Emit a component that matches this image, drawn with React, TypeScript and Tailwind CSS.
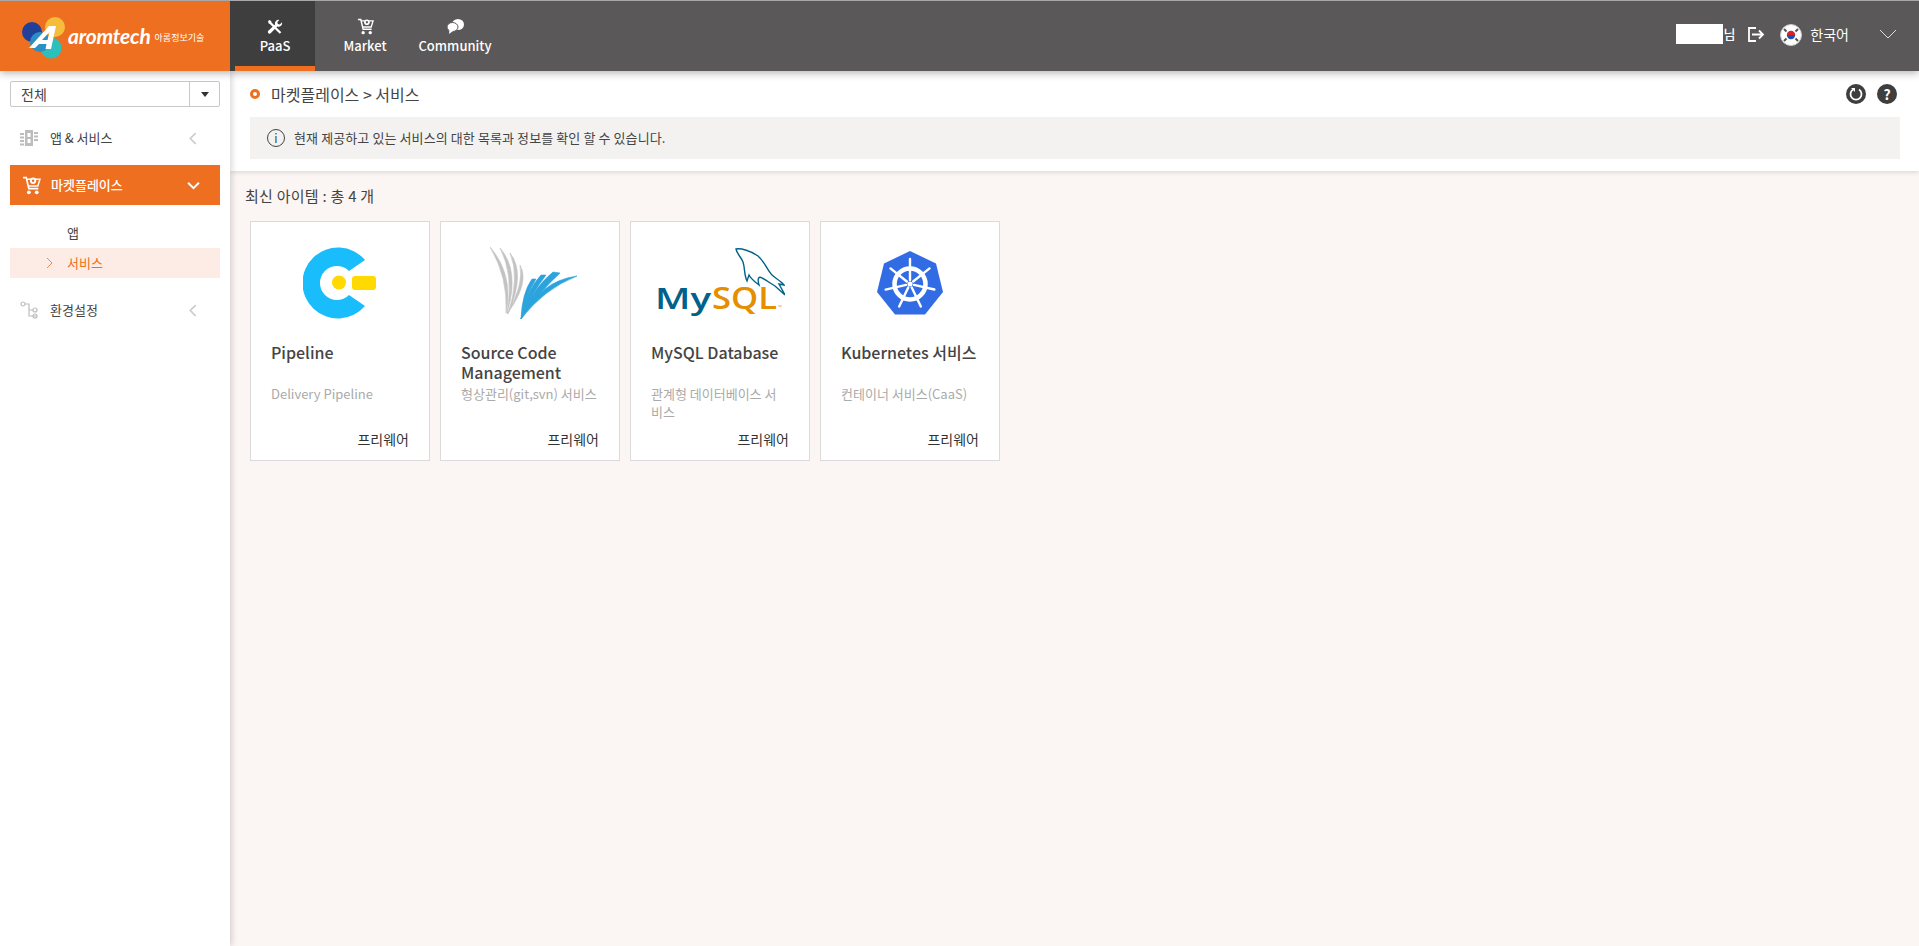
const FONT = "font-['Noto_Sans_CJK_KR','Noto_Sans',sans-serif]";

const CARDS = [
  { title: 'Pipeline', desc: 'Delivery Pipeline', logo: 'pipeline' },
  { title: 'Source Code Management', desc: '형상관리(git,svn) 서비스', logo: 'scm' },
  { title: 'MySQL Database', desc: '관계형 데이터베이스 서비스', logo: 'mysql' },
  { title: 'Kubernetes 서비스', desc: '컨테이너 서비스(CaaS)', logo: 'k8s' },
];

function BrandMark() {
  return (
    <svg width="44" height="42" viewBox="0 0 44 42" className="mt-[4px] shrink-0">
      <circle cx="10" cy="15" r="10" fill="#21409a" />
      <circle cx="33" cy="10" r="10" fill="#f6bd3b" />
      <circle cx="29" cy="31" r="10.500" fill="#2cc0bd" />
      <circle cx="18" cy="25" r="10" fill="#2a8fc4" />
      <path d="M7 31 L27 9 L34 9 L29 32 L23.500 32 L24.500 27 L17 27 L13 31 Z M20 23 L25.500 23 L27.500 15 Z" fill="#fff" fillRule="evenodd" />
    </svg>
  );
}

function PaasIcon() {
  return (
    <svg width="16" height="16" viewBox="0 0 16 16" fill="#fff">
      <path d="M1 2.200 2.200 1l2 1 .3 1.400 9.800 9.800-1.600 1.600-9.800-9.800L1.700 4.600z" />
      <path d="M15 3.200a3.600 3.600 0 0 1-4.700 4.400L3.900 14a1.700 1.700 0 0 1-2.600-2.300l6.700-6.200A3.600 3.600 0 0 1 12.400 1l-2 2 .4 2 2 .4z" />
    </svg>
  );
}

function CartIcon({ size = 16, hole = '#ee6f20' }: { size?: number; hole?: string }) {
  return (
    <svg width={size} height={size} viewBox="0 0 18 18" fill="none" stroke="#fff">
      <path d="M1 1.500h3l2.500 10.500h9" strokeWidth="1.600" />
      <path d="M4.500 3H17l-2 6.500H6" strokeWidth="1.400" />
      <circle cx="10.500" cy="4.500" r="3" fill="#fff" stroke="none" />
      <circle cx="10.500" cy="4.500" r="1.200" fill={hole} stroke="none" />
      <circle cx="6.500" cy="15.500" r="1.800" fill="#fff" stroke="none" />
      <circle cx="14" cy="15.500" r="1.800" fill="#fff" stroke="none" />
    </svg>
  );
}

function ChatIcon() {
  return (
    <svg width="17" height="15" viewBox="0 0 17 15" fill="#fff">
      <ellipse cx="11" cy="5.500" rx="6" ry="5.500" />
      <ellipse cx="5.500" cy="8" rx="5.500" ry="4.500" stroke="#5a5858" strokeWidth="1" />
      <path d="M2.500 10.500 2 15l4-3z" />
    </svg>
  );
}

function Chevron({ dir, color = '#cccccc', size = 12, width = 1.5 }: { dir: 'left' | 'right' | 'down'; color?: string; size?: number; width?: number }) {
  const d = dir === 'left' ? 'M8 1 3 6l5 5' : dir === 'right' ? 'M4 1l5 5-5 5' : 'M1 3.500 6 8.500l5-5';
  return (
    <svg width={size} height={size} viewBox="0 0 12 12" fill="none" stroke={color} strokeWidth={width}>
      <path d={d} />
    </svg>
  );
}

function FlagIcon() {
  return (
    <svg width="22" height="22" viewBox="0 0 22 22">
      <circle cx="11" cy="11" r="10.500" fill="#fff" stroke="#c9c9c9" />
      <path d="M4 5 6.500 7.500M18 5 15.500 7.500M4 17 6.500 14.500M18 17 15.500 14.500" stroke="#555" strokeWidth="2" />
      <path d="M6.800 11a4.200 4.200 0 0 1 8.400 0z" fill="#d8232a" />
      <path d="M6.800 11a4.200 4.200 0 0 0 8.400 0z" fill="#1f4fb0" />
    </svg>
  );
}

function PipelineLogo() {
  return (
    <svg width="74" height="72" viewBox="0 0 74 72">
      <path d="M62 13A35.500 35.500 0 1 0 62 59L46 48a17 17 0 1 1 0-24z" fill="#19bdfb" />
      <circle cx="36" cy="35.500" r="7" fill="#ffd900" />
      <rect x="49" y="29" width="24" height="14" rx="3" fill="#ffd900" />
    </svg>
  );
}

function ScmLogo() {
  const gray = [
    'M0 0Q24 28 16 66Q18 30 0 0Z',
    'M10 1Q30 24 17 66Q24 28 10 1Z',
    'M20 6Q36 26 18 67Q30 30 20 6Z',
    'M30 18Q40 36 17 67Q34 38 30 18Z',
  ];
  const blue = [
    'M42 32Q32 46 31 72Q36 48 46 32Z',
    'M51 28Q36 44 31 72Q42 46 56 28Z',
    'M63 25Q42 42 31 72Q48 46 70 26Z',
    'M87 29Q50 34 31 72Q54 42 87 29Z',
  ];
  return (
    <svg width="87" height="73" viewBox="0 0 87 73" className="ml-[7px] mt-px">
      {gray.map((d, i) => <path key={i} d={d} fill="#c2c2c2" stroke="#c2c2c2" strokeWidth="0.600" />)}
      {blue.map((d, i) => <path key={i} d={d} fill="#2ba3dc" stroke="#2ba3dc" strokeWidth="0.600" />)}
    </svg>
  );
}

function MysqlLogo() {
  return (
    <svg width="130" height="70" viewBox="0 0 130 70">
      <path d="M81 1C86 0 96 3 103 8C110 14 112 22 117 27C120 30 126 33 129 37L124 36L130 47L120 38C115 35 111 32 107 30C104 28 102 30 104 37C99 33 96 31 94 27L92 33C89 27 90 20 88 14C86 9 82 6 81 1Z" fill="none" stroke="#00618a" strokeWidth="1.400" />
      <text x="0" y="61" fill="#00618a" fontFamily="'Open Sans',sans-serif" fontWeight="600" fontSize="29" textLength="56" lengthAdjust="spacingAndGlyphs">My</text>
      <text x="57" y="61" fill="#e48e00" fontFamily="'Open Sans',sans-serif" fontWeight="600" fontSize="31" textLength="65" lengthAdjust="spacingAndGlyphs">SQL</text>
      <text x="123" y="61" fill="#e48e00" fontFamily="'Open Sans',sans-serif" fontSize="5">™</text>
    </svg>
  );
}

function K8sLogo() {
  const spokes = [0, 51.4, 102.8, 154.3, 205.7, 257.1, 308.6];
  return (
    <svg width="66" height="64" viewBox="0 0 66 64">
      <path d="M33 0 59 12.500 66 41 48 63.500H18L0 41 7 12.500z" fill="#326ce5" />
      <g fill="none" stroke="#fff" transform="translate(33 33)">
        <circle r="15.500" strokeWidth="4.500" />
        {spokes.map((a) => (
          <g key={a} transform={`rotate(${a})`}>
            <path d="M0-4V-25" strokeWidth="2.400" strokeLinecap="round" />
          </g>
        ))}
        <circle r="2.500" fill="#fff" stroke="none" />
      </g>
    </svg>
  );
}

function CardLogo({ name }: { name: string }) {
  if (name === 'pipeline') return <PipelineLogo />;
  if (name === 'scm') return <ScmLogo />;
  if (name === 'mysql') return <MysqlLogo />;
  return <K8sLogo />;
}

function ServiceCard({ title, desc, logo }: { title: string; desc: string; logo: string }) {
  return (
    <div className="flex h-[240px] w-[180px] flex-col border border-[#dcdada] bg-white px-5 pb-[12px]">
      <div className="mt-[23px] flex h-[75px] items-center justify-center">
        <CardLogo name={logo} />
      </div>
      <div className="mt-[22px] h-[40px] text-[16px] leading-[20px] font-medium text-[#444]">{title}</div>
      <div className="mt-[3px] h-[36px] pr-[2px] text-[13px] leading-[18px] break-all text-[#aaa]">{desc}</div>
      <div className="mt-auto text-right text-[14px] leading-[18px] text-[#333]">프리웨어</div>
    </div>
  );
}

function Sidebar() {
  return (
    <aside className="relative z-10 w-[230px] shrink-0 bg-white px-[10px] pt-[10px] shadow-[2px_0_6px_rgba(0,0,0,0.15)]">
      <div className="flex h-[26px] items-center rounded-[2px] border border-[#c8c8c8] text-[14px] text-[#444]">
        <span className="flex-1 pl-[10px]">전체</span>
        <span className="flex h-full w-[30px] items-center justify-center border-l border-[#c8c8c8]">
          <span className="h-0 w-0 border-x-[4px] border-t-[5px] border-x-transparent border-t-[#333]" />
        </span>
      </div>
      <div className="mt-[11px] flex h-[40px] items-center pl-[10px] pr-[20px] text-[13px] text-[#444]">
        <svg width="18" height="16" viewBox="0 0 18 16" fill="#bdbdbd" className="mr-[12px]">
          <path d="M0 3h4v2H0zM0 6.500h4v2H0zM0 10h4v2H0zM0 13.500h4v2H0zM14 2h4v2h-4zM14 5.500h4v2h-4zM14 9h4v2h-4zM5 0h8v16H5zM7.500 3v4h3V3zM7.500 9v4h3V9z" fillRule="evenodd" />
        </svg>
        <span className="flex-1">앱 &amp; 서비스</span>
        <Chevron dir="left" size={13} />
      </div>
      <div className="mt-[7px] flex h-[40px] items-center bg-[#ee6f20] pl-[12px] pr-[20px] text-[13px] font-medium text-white">
        <span className="mr-[10px] flex"><CartIcon size={19} /></span>
        <span className="flex-1">마켓플레이스</span>
        <Chevron dir="down" color="#fff" size={13} width={1.800} />
      </div>
      <div className="mt-[13px] flex h-[29px] items-center pl-[57px] text-[13px] text-[#444]">앱</div>
      <div className="mt-px flex h-[30px] items-center bg-[#fdece5] pl-[33px] text-[13px] text-[#ee6f20]">
        <span className="mr-[12px] flex"><Chevron dir="right" color="#ee8a55" size={12} width={1} /></span>
        서비스
      </div>
      <div className="mt-[12px] flex h-[40px] items-center pl-[10px] pr-[20px] text-[13px] text-[#444]">
        <svg width="18" height="18" viewBox="0 0 18 18" fill="none" stroke="#bdbdbd" strokeWidth="1.200" className="mr-[12px]">
          <circle cx="3" cy="3" r="2" />
          <circle cx="15" cy="9" r="2" />
          <circle cx="15" cy="15" r="2" />
          <path d="M5 3h4v12h8M9 9h4" />
        </svg>
        <span className="flex-1">환경설정</span>
        <Chevron dir="left" size={13} />
      </div>
    </aside>
  );
}

export default function App() {
  return (
    <div className={`flex h-screen w-full flex-col overflow-hidden bg-white ${FONT}`}>
      <header className="relative z-20 flex h-[71px] shrink-0 border-t border-[#a8a8a8] bg-[#5a5858] shadow-[0_2px_8px_rgba(0,0,0,0.3)]">
        <div className="flex w-[230px] items-center bg-[#ee6f20] pl-[22px]">
          <BrandMark />
          <span className="ml-[2px] font-['Lato',sans-serif] text-[21px] font-bold tracking-[-0.2px] text-white italic">aromtech</span>
          <span className="ml-[4px] mt-[3px] text-[9px] text-white">아롬정보기술</span>
        </div>
        <div className="w-[5px] bg-[#3f3e3e]" />
        <div className="flex w-[80px] flex-col items-center border-b-[5px] border-[#ee6f20] bg-[#3f3e3e] pt-[17px] text-[13px] font-medium text-white">
          <span className="flex h-[17px] items-center"><PaasIcon /></span>
          <span className="mt-px leading-[20px]">PaaS</span>
        </div>
        <div className="flex w-[100px] flex-col items-center pt-[17px] text-[13px] font-medium text-white">
          <span className="flex h-[17px] items-center"><CartIcon size={17} hole="#5a5858" /></span>
          <span className="mt-px leading-[20px]">Market</span>
        </div>
        <div className="flex w-[80px] flex-col items-center pt-[17px] text-[13px] font-medium text-white">
          <span className="flex h-[17px] items-center"><ChatIcon /></span>
          <span className="mt-px leading-[20px]">Community</span>
        </div>
        <div className="ml-auto flex items-start pr-[22px] pt-[23px] text-[14px] text-white">
          <span className="h-[20px] w-[47px] bg-white" />
          <span className="font-medium leading-[20px] text-[13px]">님</span>
          <svg width="17" height="15" viewBox="0 0 17 15" fill="none" stroke="#fff" strokeWidth="1.800" className="ml-[13px] mt-[3px]">
            <path d="M8 1H1v13h7M4 7.500h11M11 3.500l4 4-4 4" />
          </svg>
          <span className="ml-[15px] flex"><FlagIcon /></span>
          <span className="ml-[8px] leading-[20px]">한국어</span>
          <span className="ml-[30px] mt-[1px] flex">
            <svg width="18" height="18" viewBox="0 0 18 18" fill="none" stroke="#ddd" strokeWidth="1">
              <path d="M1 5l8 8 8-8" />
            </svg>
          </span>
        </div>
      </header>

      <div className="flex min-h-0 flex-1">
        <Sidebar />
        <main className="min-w-0 flex-1 bg-[#fbf6f3]">
          <section className="h-[100px] bg-white pl-[20px] pr-[19px] pt-[14px] shadow-[0_1px_5px_rgba(0,0,0,0.15)]">
            <div className="flex h-[18px] items-center text-[16px] text-[#444]">
              <span className="mr-[11px] h-[10px] w-[10px] rounded-full border-[3px] border-[#ee6f20]" />
              <span>마켓플레이스 &gt; 서비스</span>
              <span className="ml-auto mr-[3px] flex gap-[11px]">
                <svg width="20" height="20" viewBox="0 0 20 20">
                  <circle cx="10" cy="10" r="10" fill="#3f3e3e" />
                  <path d="M7 5.500a5.500 5.500 0 1 0 6 0" fill="none" stroke="#fff" strokeWidth="1.800" />
                  <path d="M5 4h4v4z" fill="#fff" />
                </svg>
                <span className="flex h-[20px] w-[20px] items-center justify-center rounded-full bg-[#3f3e3e] text-[14px] leading-none font-bold text-white">?</span>
              </span>
            </div>
            <div className="mt-[14px] flex h-[42px] items-center bg-[#f3f2f0] pl-[17px] text-[13px] tracking-[0.1px] text-[#444]">
              <span className="mr-[9px] flex h-[18px] w-[18px] items-center justify-center rounded-full border border-[#444] text-[12px] leading-none">i</span>
              현재 제공하고 있는 서비스의 대한 목록과 정보를 확인 할 수 있습니다.
            </div>
          </section>
          <div className="pl-[15px] pt-[15px] text-[15px] leading-[20px] tracking-[0.25px] text-[#444]">최신 아이템 : 총 4 개</div>
          <div className="mt-[15px] flex gap-[10px] pl-[20px]">
            {CARDS.map((c) => (
              <ServiceCard key={c.title} title={c.title} desc={c.desc} logo={c.logo} />
            ))}
          </div>
        </main>
      </div>
    </div>
  );
}
